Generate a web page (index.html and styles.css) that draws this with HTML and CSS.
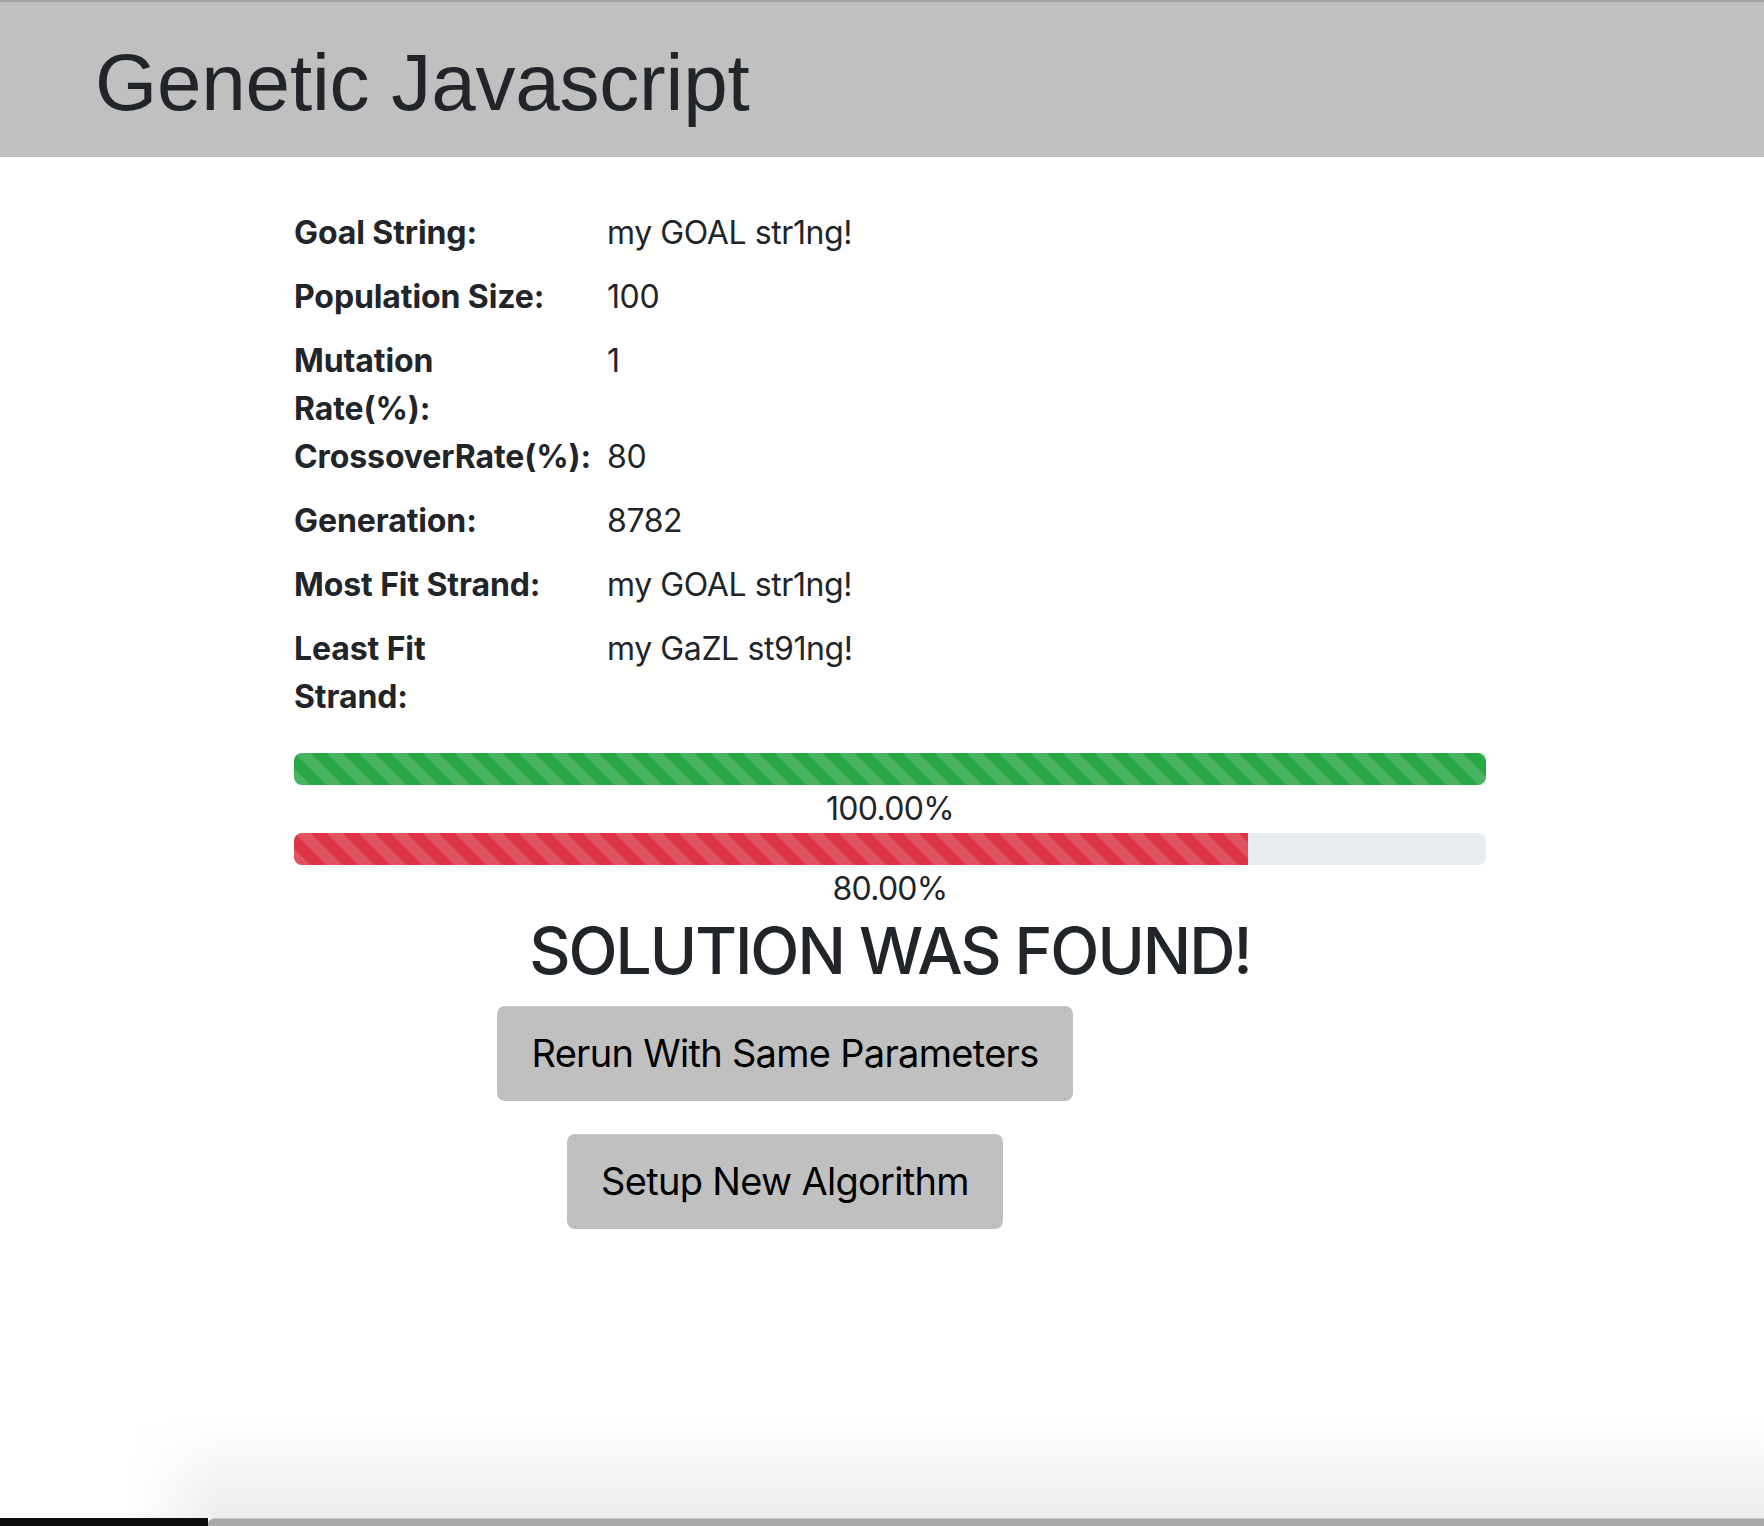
FILE: index.html
```html
<!DOCTYPE html>
<html lang="en">
<head>
<meta charset="utf-8">
<title>Genetic Javascript</title>
<link rel="stylesheet" href="styles.css">
</head>
<body>
<header class="topbar">
  <h1 class="brand">Genetic Javascript</h1>
</header>
<main class="content">
  <dl class="stats">
    <dt class="label">Goal String:</dt><dd class="value">my GOAL str1ng!</dd>
    <dt class="label">Population Size:</dt><dd class="value">100</dd>
    <dt class="label">Mutation<br>Rate(%):</dt><dd class="value">1</dd>
    <dt class="label">CrossoverRate(%):</dt><dd class="value">80</dd>
    <dt class="label">Generation:</dt><dd class="value">8782</dd>
    <dt class="label">Most Fit Strand:</dt><dd class="value">my GOAL str1ng!</dd>
    <dt class="label">Least Fit<br>Strand:</dt><dd class="value">my GaZL st91ng!</dd>
  </dl>

  <div class="progress"><div class="bar bar-success" style="width: 100%"></div></div>
  <div class="progress-label">100.00%</div>
  <div class="progress"><div class="bar bar-danger" style="width: 80%"></div></div>
  <div class="progress-label">80.00%</div>

  <h2 class="result">SOLUTION WAS FOUND!</h2>

  <div class="actions">
    <button class="btn">Rerun With Same Parameters</button>
    <button class="btn">Setup New Algorithm</button>
  </div>
</main>
<div class="window-shadow"></div>
<div class="dock"><div class="dock-dark"></div><div class="dock-light"></div></div>
</body>
</html>
```
FILE: styles.css
```css
* { box-sizing: border-box; }

html, body { height: 100%; }

body {
  margin: 0;
  display: flex;
  flex-direction: column;
  min-height: 100vh;
  font-family: Inter, "Noto Sans", sans-serif;
  color: #212529;
  background: #fff;
}

.topbar {
  border-top: 2px solid #a2a2a2;
  background: #c0c0c0;
  padding: 33px 95px 26px;
}

.brand {
  margin: 0;
  font-family: "Liberation Sans", Arial, sans-serif;
  font-weight: 400;
  font-size: 80px;
  line-height: 96px;
  letter-spacing: -0.2px;
  color: #212529;
}

.content {
  flex: 1;
  padding: 52px 278px 0 294px;
}

.stats {
  display: grid;
  grid-template-columns: 313px 1fr;
  align-items: start;
  margin: 0 0 32px;
  font-size: 32px;
  line-height: 48px;
}

.label {
  margin: 0;
  font-weight: 700;
  letter-spacing: -0.1px;
  white-space: nowrap;
}

.value {
  margin: 0 0 16px;
  font-weight: 400;
  letter-spacing: -0.4px;
}

.progress {
  height: 32px;
  border-radius: 8px;
  background: #e9ecef;
  overflow: hidden;
  display: flex;
}

.bar {
  height: 100%;
  background-image: linear-gradient(45deg,
    rgba(255,255,255,.15) 25%, transparent 25%,
    transparent 50%, rgba(255,255,255,.15) 50%,
    rgba(255,255,255,.15) 75%, transparent 75%, transparent);
  background-size: 32px 32px;
}

.bar-success { background-color: #28a745; }
.bar-danger { background-color: #dc3545; }

.progress-label {
  font-size: 32px;
  line-height: 48px;
  letter-spacing: -0.7px;
  text-align: center;
}

.result {
  margin: 0 0 16px;
  font-size: 64px;
  line-height: 76.8px;
  font-weight: 500;
  letter-spacing: -2px;
  text-align: center;
}

.actions {
  display: flex;
  flex-direction: column;
  align-items: center;
  gap: 33px;
  margin-right: 210px;
}

.btn {
  font-family: Inter, "Noto Sans", sans-serif;
  font-size: 38px;
  line-height: 59px;
  letter-spacing: -0.7px;
  padding: 16px 32px;
  border: 2px solid #c0c0c0;
  border-radius: 8px;
  background: #c0c0c0;
  color: #000;
}

.window-shadow {
  height: 98px;
  background:
    linear-gradient(to right, #fff 130px, rgba(255,255,255,0) 220px),
    linear-gradient(to bottom, #fff, #ececec);
}

.dock {
  height: 8px;
  display: flex;
}

.dock-dark {
  width: 208px;
  background: #0d0f0c;
}

.dock-light {
  flex: 1;
  background: #a9a9a7;
  border-top: 1px solid #c8c8c6;
  border-top-left-radius: 6px;
}
```
